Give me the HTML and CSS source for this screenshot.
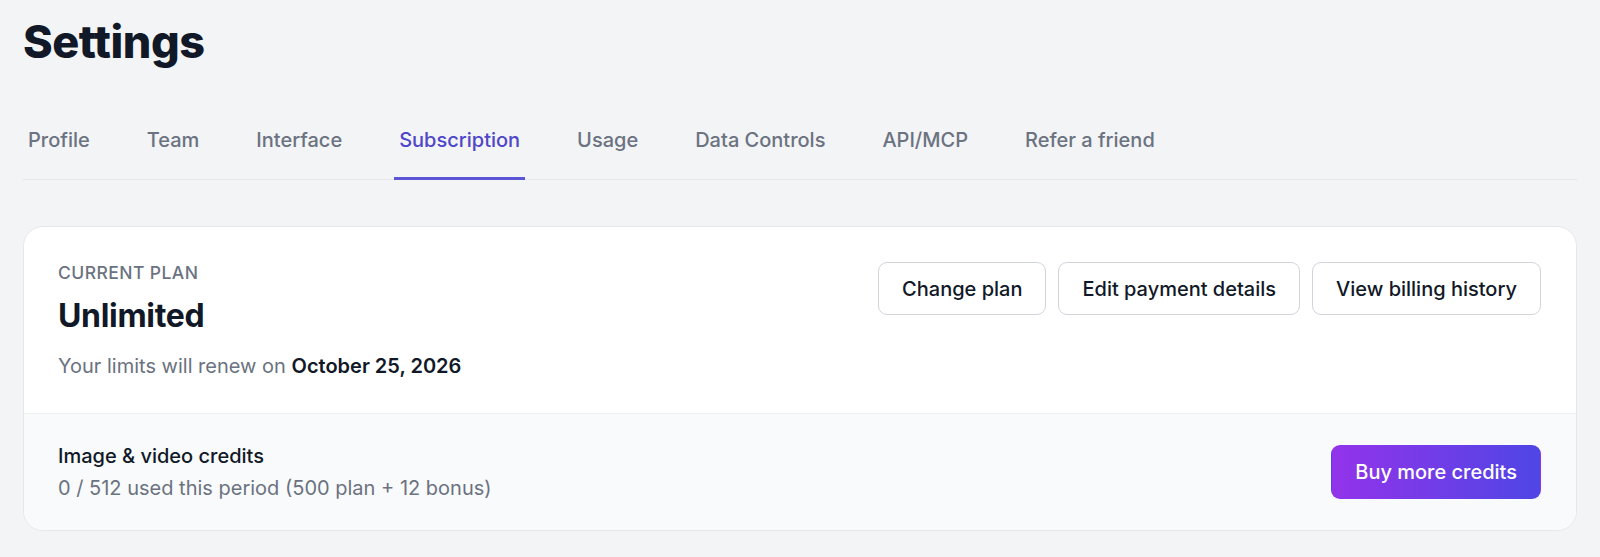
FILE: index.html
```html
<!DOCTYPE html>
<html lang="en">
<head>
<meta charset="utf-8">
<title>Settings</title>
<link rel="stylesheet" href="styles.css">
</head>
<body>
<main class="page">
  <h1 class="page-title">Settings</h1>
  <nav class="tabs">
    <a class="tab">Profile</a>
    <a class="tab">Team</a>
    <a class="tab">Interface</a>
    <a class="tab tab-active">Subscription</a>
    <a class="tab">Usage</a>
    <a class="tab">Data Controls</a>
    <a class="tab">API/MCP</a>
    <a class="tab">Refer a friend</a>
  </nav>
  <section class="card">
    <div class="plan">
      <div class="plan-info">
        <div class="plan-label">CURRENT PLAN</div>
        <div class="plan-name">Unlimited</div>
        <div class="plan-renew">Your limits will renew on <strong>October 25, 2026</strong></div>
      </div>
      <div class="plan-actions">
        <button class="btn">Change plan</button>
        <button class="btn">Edit payment details</button>
        <button class="btn">View billing history</button>
      </div>
    </div>
    <div class="credits">
      <div class="credits-info">
        <div class="credits-title">Image &amp; video credits</div>
        <div class="credits-sub">0 / 512 used this period (500 plan + 12 bonus)</div>
      </div>
      <button class="btn-primary">Buy more credits</button>
    </div>
  </section>
</main>
</body>
</html>
```
FILE: styles.css
```css
* { box-sizing: border-box; }
html, body {
  margin: 0;
  padding: 0;
  background: #f3f4f6;
}
body {
  font-family: Inter, "Liberation Sans", sans-serif;
  color: #111827;
  -webkit-font-smoothing: antialiased;
}
.page {
  padding: 17px 23px 0 23px;
}
.page-title {
  margin: 0;
  font-size: 45px;
  line-height: 50px;
  font-weight: 800;
  letter-spacing: -0.01em;
  color: #111827;
}
.tabs {
  display: flex;
  gap: 47px;
  margin-top: 59px;
  border-bottom: 1px solid #e5e7eb;
}
.tab {
  display: block;
  padding: 0 5px 23px 5px;
  font-size: 20px;
  line-height: 28px;
  font-weight: 500;
  color: #6b7280;
  border-bottom: 3px solid transparent;
  margin-bottom: -1px;
  cursor: pointer;
}
.tab-active {
  color: #4f46c9;
  border-bottom-color: #5b55d6;
}
.card {
  margin-top: 46px;
  background: #ffffff;
  border: 1px solid #e5e7eb;
  border-radius: 20px;
  overflow: hidden;
}
.plan {
  display: flex;
  justify-content: space-between;
  align-items: flex-start;
  padding: 35px 35px 32px 34px;
}
.plan-label {
  font-size: 17.5px;
  line-height: 22px;
  font-weight: 500;
  letter-spacing: 0.025em;
  color: #6b7280;
}
.plan-name {
  margin-top: 12px;
  font-size: 32px;
  line-height: 40px;
  font-weight: 700;
  letter-spacing: -0.01em;
  color: #111827;
}
.plan-renew {
  margin-top: 15px;
  font-size: 20px;
  line-height: 30px;
  color: #6b7280;
}
.plan-renew strong {
  font-weight: 600;
  color: #111827;
}
.plan-actions {
  display: flex;
  gap: 12px;
}
.btn {
  font-family: inherit;
  font-size: 20px;
  line-height: 28px;
  font-weight: 500;
  color: #111827;
  background: #ffffff;
  border: 1px solid #d1d5db;
  border-radius: 9px;
  padding: 11.5px 23px;
  cursor: pointer;
}
.credits {
  display: flex;
  justify-content: space-between;
  align-items: center;
  padding: 28px 35px 28px 34px;
  background: #f9fafb;
  border-top: 1px solid #f0f1f3;
}
.credits-title {
  font-size: 20px;
  line-height: 28px;
  font-weight: 500;
  color: #111827;
}
.credits-sub {
  margin-top: 4px;
  font-size: 20px;
  line-height: 28px;
  color: #6b7280;
}
.btn-primary {
  font-family: inherit;
  font-size: 20px;
  line-height: 28px;
  font-weight: 500;
  color: #ffffff;
  background: linear-gradient(90deg, #9333ea, #4f46e5);
  border: 1px solid transparent;
  border-radius: 9px;
  padding: 12px 23px;
  cursor: pointer;
}
```
